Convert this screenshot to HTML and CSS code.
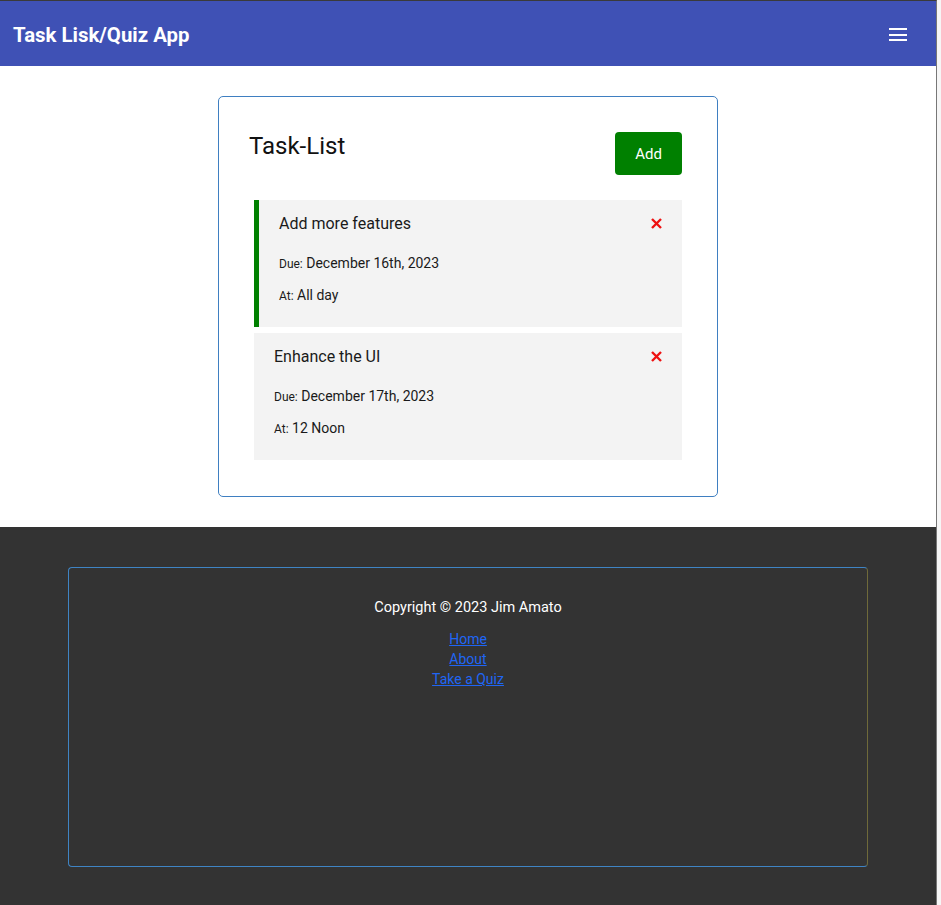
FILE: index.html
```html
<!DOCTYPE html>
<html lang="en">
<head>
<meta charset="utf-8">
<title>Task Lisk/Quiz App</title>
<link rel="stylesheet" href="styles.css">
</head>
<body>
<div class="page">
  <header class="topbar">
    <h1 class="brand">Task Lisk/Quiz App</h1>
    <button class="menu" aria-label="menu">
      <span></span><span></span><span></span>
    </button>
  </header>
  <main class="main">
    <section class="card">
      <div class="card-head">
        <h2 class="card-title">Task-List</h2>
        <button class="add-btn">Add</button>
      </div>
      <div class="tasks">
        <div class="task task-reminder">
          <div class="task-top">
            <p class="task-title">Add more features</p>
            <svg class="del" width="11" height="11" viewBox="0 0 11 11"><path d="M1 1L10 10M10 1L1 10" stroke="#ee1111" stroke-width="2.4" fill="none"/></svg>
          </div>
          <p class="meta meta-due"><span class="lbl">Due:</span> December 16th, 2023</p>
          <p class="meta meta-at"><span class="lbl">At:</span> All day</p>
        </div>
        <div class="task">
          <div class="task-top">
            <p class="task-title">Enhance the UI</p>
            <svg class="del" width="11" height="11" viewBox="0 0 11 11"><path d="M1 1L10 10M10 1L1 10" stroke="#ee1111" stroke-width="2.4" fill="none"/></svg>
          </div>
          <p class="meta meta-due"><span class="lbl">Due:</span> December 17th, 2023</p>
          <p class="meta meta-at"><span class="lbl">At:</span> 12 Noon</p>
        </div>
      </div>
    </section>
  </main>
  <footer class="footer">
    <div class="footer-box">
      <p class="copy">Copyright © 2023 Jim Amato</p>
      <nav class="links">
        <a href="#">Home</a>
        <a href="#">About</a>
        <a href="#">Take a Quiz</a>
      </nav>
    </div>
  </footer>
</div>
</body>
</html>
```

FILE: styles.css
```css
html, body {
  margin: 0;
  padding: 0;
  height: 100%;
}
body {
  background: #f6f6f6;
  font-family: Roboto, "Liberation Sans", sans-serif;
  color: #222;
}
.page {
  margin-right: 4px;
  border-right: 1px solid #777;
  border-top: 1px solid #3a3a3a;
  min-height: calc(100% - 1px);
  display: flex;
  flex-direction: column;
  background: #fff;
}
.topbar {
  height: 65px;
  background: #3f51b5;
  display: flex;
  align-items: center;
  justify-content: space-between;
  padding: 0 29px 0 13px;
}
.brand {
  margin: 0;
  font-size: 20.4px;
  font-weight: 700;
  color: #fff;
  line-height: 24px;
  position: relative;
  top: 1px;
}
.menu {
  background: none;
  border: 0;
  padding: 0;
  width: 18px;
  display: flex;
  flex-direction: column;
  gap: 3.5px;
  margin-top: 2px;
}
.menu span {
  display: block;
  height: 2px;
  background: #fff;
}
.main {
  padding: 30px 0 30px;
  display: flex;
  justify-content: center;
}
.card {
  width: 428px;
  border: 1px solid #3f7fc1;
  border-radius: 5px;
  padding: 35px 35px 36px;
}
.card-head {
  display: flex;
  justify-content: space-between;
  align-items: flex-start;
  margin-bottom: 25px;
}
.card-title {
  margin: 0 0 0 -5px;
  font-size: 24px;
  font-weight: 400;
  line-height: 28.8px;
  color: #111;
}
.add-btn {
  width: 67px;
  height: 43px;
  background: #008000;
  color: #fff;
  border: 0;
  border-radius: 4px;
  font-family: Roboto, "Liberation Sans", sans-serif;
  font-size: 15px;
}
.tasks {
  display: flex;
  flex-direction: column;
  gap: 6px;
}
.task {
  background: #f3f3f3;
  padding: 15px 20px 23px;
}
.task-reminder {
  border-left: 5px solid #008000;
}
.task-top {
  display: flex;
  justify-content: space-between;
  align-items: center;
}
.task-title {
  margin: 0;
  font-size: 16px;
  line-height: 18px;
  color: #1a1a1a;
}
.del {
  display: block;
  margin-top: -2px;
}
.meta {
  margin: 0;
  font-size: 14px;
  line-height: 18px;
  color: #1a1a1a;
}
.meta-due {
  margin-top: 21px;
}
.meta-at {
  margin-top: 14px;
}
.lbl {
  font-size: 12px;
  line-height: 1;
}
.footer {
  flex: 1;
  background: #333;
  padding: 40px 68px 39px;
}
.footer-box {
  height: 268px;
  border: 1px solid #3f84c4;
  border-right-color: #6f6a3a;
  border-radius: 4px;
  text-align: center;
  padding-top: 30px;
}
.copy {
  margin: 0;
  color: #fff;
  font-size: 14.5px;
  font-weight: 400;
  line-height: 20px;
}
.links {
  margin-top: 11px;
  display: flex;
  flex-direction: column;
  align-items: center;
}
.links a {
  color: #1f66f5;
  font-size: 14px;
  line-height: 20px;
}
```
